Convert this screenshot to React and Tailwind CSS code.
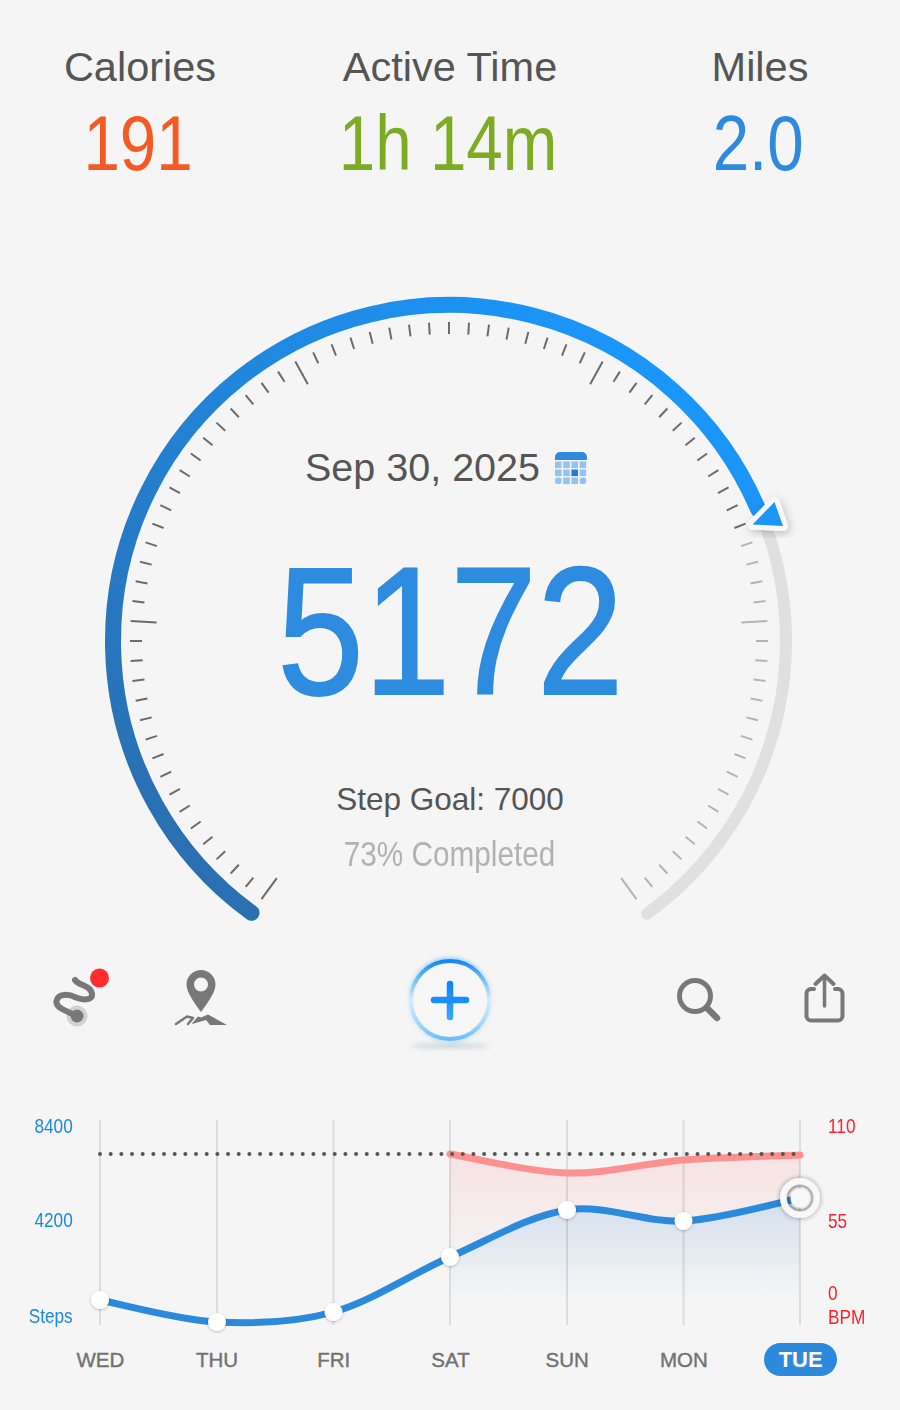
import React from 'react';

const sans = 'font-["Liberation_Sans",Arial,sans-serif]';
const cx = 449;
const cy = 641;

const polar = (deg, r) => {
    const a = (deg * Math.PI) / 180;
    return [cx + r * Math.sin(a), cy - r * Math.cos(a)];
};

const arc = (from, to, r) => {
    const [x1, y1] = polar(from, r);
    const [x2, y2] = polar(to, r);
    return `M${x1} ${y1}A${r} ${r} 0 ${to - from > 180 ? 1 : 0} 1 ${x2} ${y2}`;
};

// catmull-rom through the day points
const spline = (pts) => {
    let d = `M${pts[0][0]} ${pts[0][1]}`;
    for (let i = 0; i < pts.length - 1; i++) {
        const p0 = pts[i - 1] || pts[i];
        const p1 = pts[i];
        const p2 = pts[i + 1];
        const p3 = pts[i + 2] || p2;
        const c1 = [p1[0] + (p2[0] - p0[0]) / 6, p1[1] + (p2[1] - p0[1]) / 6];
        const c2 = [p2[0] - (p3[0] - p1[0]) / 6, p2[1] - (p3[1] - p1[1]) / 6];
        d += `C${c1[0]} ${c1[1]} ${c2[0]} ${c2[1]} ${p2[0]} ${p2[1]}`;
    }
    return d;
};

const dayX = [100, 217, 333.5, 450, 567, 683.5, 800];
const steps = [1300, 1322, 1312, 1257, 1210, 1221, 1198].map((y, i) => [dayX[i], y]);
const bpm = [
    [450, 1154],
    [567, 1173],
    [683.5, 1160],
    [800, 1155],
];
const stepsTail = steps.slice(3);
const days = ['WED', 'THU', 'FRI', 'SAT', 'SUN', 'MON', 'TUE'];
const ticks = Array.from({ length: 81 }, (_, i) => -144 + i * 3.6);

const Stat = ({ label, value, color }) => (
    <div className={`flex flex-col items-center ${sans}`}>
        <p className="text-[41.500px] leading-[48px] text-[#555555] whitespace-nowrap">{label}</p>
        <p className={`text-[78px] leading-[100px] mt-[2px] scale-x-[.84] -translate-x-[2px] whitespace-nowrap ${color}`}>
            {value}
        </p>
    </div>
);

const Gauge = () => (
    <svg className="[grid-area:1/1] w-[900px] h-[650px]" viewBox="0 280 900 650" fill="none">
        <defs>
            <linearGradient id="gaugeBlue" gradientUnits="userSpaceOnUse" x1="640" y1="340" x2="180" y2="860">
                <stop offset="0" stopColor="#1a97fb" />
                <stop offset="1" stopColor="#2a6fb1" />
            </linearGradient>
            <filter id="triShadow" x="-50%" y="-50%" width="200%" height="200%">
                <feDropShadow dx="2" dy="3" stdDeviation="5" floodColor="#000" floodOpacity=".22" />
            </filter>
        </defs>
        {ticks.map((deg, i) => {
            const major = i % 16 === 0;
            const [x1, y1] = polar(deg, major ? 293 : 307);
            const [x2, y2] = polar(deg, 319);
            const done = deg < 69;
            return (
                <line
                    key={i}
                    x1={x1}
                    y1={y1}
                    x2={x2}
                    y2={y2}
                    stroke={done ? '#6b6b6b' : '#b4b4b4'}
                    strokeWidth="2"
                />
            );
        })}
        <path d={arc(60, 144, 337)} stroke="#e0e0e0" strokeWidth="12" strokeLinecap="round" />
        <path d={arc(-144, 67, 336)} stroke="url(#gaugeBlue)" strokeWidth="16" strokeLinecap="round" />
        <path
            d="M774.5 502L752.5 524.5L783 526Z"
            fill="#1a97f7"
            stroke="#f8f8f8"
            strokeWidth="10"
            strokeLinejoin="round"
            paintOrder="stroke"
            filter="url(#triShadow)"
        />
    </svg>
);

const CalendarIcon = () => (
    <svg width="32" height="34" viewBox="0 0 32 34">
        <path d="M0 9V6a5 5 0 0 1 5-5h22a5 5 0 0 1 5 5v3Z" fill="#2d8ade" />
        {[0, 1, 2].map((r) =>
            [0, 1, 2, 3].map((c) => (
                <rect
                    key={`${r}-${c}`}
                    x={c * 8.2}
                    y={10.5 + r * 8}
                    width="6.6"
                    height="6.6"
                    rx={(r === 2 && (c === 0 || c === 3)) ? 2.5 : 0}
                    fill={r === 1 && c === 2 ? '#1b7fd9' : '#92c4ef'}
                />
            ))
        )}
    </svg>
);

const RouteIcon = () => (
    <svg width="70" height="70" viewBox="0 0 70 70" fill="none">
        <circle cx="36" cy="53" r="10.5" fill="#d2d2d2" />
        <circle cx="36" cy="53" r="6.5" fill="#787878" />
        <path
            d="M34 17C38 23 50 22 51 31C52 38 41 37 35 34.500C28 31 17 30 15.500 38C14.500 45 24 47 36 53"
            stroke="#787878"
            strokeWidth="6"
            strokeLinecap="round"
        />
        <circle cx="58.500" cy="15" r="9.500" fill="#ff2d2d" />
    </svg>
);

const PinIcon = () => (
    <svg width="60" height="66" viewBox="0 0 60 66" fill="none">
        <path
            fillRule="evenodd"
            d="M30 2C38 2 44.500 8.500 44.500 16.500C44.500 25 35 37 30 44C25 37 15.500 25 15.500 16.500C15.500 8.500 22 2 30 2ZM30 9.500A7 7 0 1 0 30 23.500A7 7 0 1 0 30 9.500Z"
            fill="#787878"
        />
        <path d="M5 56L16 48.500L22 50L17 56" stroke="#787878" strokeWidth="2.500" strokeLinecap="round" strokeLinejoin="round" />
        <path d="M21 55.500L27 48.500L30 49.500L37 46.500L56 57H39L35 52L21 56Z" fill="#787878" />
    </svg>
);

const PlusButton = () => (
    <svg width="124" height="110" viewBox="3 0 124 110" fill="none" className="overflow-visible">
        <defs>
            <linearGradient id="ringBlue" x1="0" y1="0" x2="0" y2="1">
                <stop offset="0" stopColor="#1089f6" />
                <stop offset=".22" stopColor="#6cbcf7" />
                <stop offset=".5" stopColor="#d8ecfb" />
                <stop offset=".8" stopColor="#a6d7fa" />
                <stop offset="1" stopColor="#6cbdf6" />
            </linearGradient>
            <linearGradient id="plusBlue" gradientUnits="userSpaceOnUse" x1="0" y1="38" x2="0" y2="71">
                <stop offset="0" stopColor="#0f88f5" />
                <stop offset="1" stopColor="#35a5f9" />
            </linearGradient>
            <filter id="blur3" x="-30%" y="-30%" width="160%" height="160%">
                <feGaussianBlur stdDeviation="2.500" />
            </filter>
            <filter id="blur4" x="-30%" y="-300%" width="160%" height="700%">
                <feGaussianBlur stdDeviation="2.500" />
            </filter>
        </defs>
        <ellipse cx="65" cy="100" rx="40" ry="2" fill="#a9bccb" opacity=".7" filter="url(#blur4)" />
        <circle cx="65" cy="54" r="39" stroke="url(#ringBlue)" strokeWidth="4" filter="url(#blur3)" opacity=".75" />
        <circle cx="65" cy="54" r="39" stroke="url(#ringBlue)" strokeWidth="4" fill="#f6f6f6" />
        <path d="M65 38V71" stroke="url(#plusBlue)" strokeWidth="6.500" strokeLinecap="round" />
        <path d="M49 54H81" stroke="#1a8ff6" strokeWidth="6.500" strokeLinecap="round" />
    </svg>
);

const SearchIcon = () => (
    <svg width="52" height="56" viewBox="0 0 52 56" fill="none">
        <circle cx="22" cy="24" r="15.500" stroke="#787878" strokeWidth="5" />
        <path d="M34 36L44 46" stroke="#787878" strokeWidth="6.500" strokeLinecap="round" />
    </svg>
);

const ShareIcon = () => (
    <svg width="52" height="56" viewBox="0 0 52 56" fill="none" stroke="#787878" strokeLinecap="round" strokeLinejoin="round">
        <path d="M11 16H8A4.500 4.500 0 0 0 3.500 20.500V43A4.500 4.500 0 0 0 8 47.500H35A4.500 4.500 0 0 0 39.500 43V20.500A4.500 4.500 0 0 0 35 16H32" strokeWidth="4" />
        <path d="M21.500 33V3" strokeWidth="3.500" />
        <path d="M12.500 11L21.500 2.500L30.500 11" strokeWidth="4" />
    </svg>
);

const Chart = () => (
    <svg className="w-[760px] h-[220px] shrink-0" viewBox="70 1114 760 220" fill="none">
        <defs>
            <linearGradient id="redFill" gradientUnits="userSpaceOnUse" x1="0" y1="1154" x2="0" y2="1270">
                <stop offset="0" stopColor="#f7e2e2" />
                <stop offset="1" stopColor="#f5f5f5" />
            </linearGradient>
            <linearGradient id="blueFill" gradientUnits="userSpaceOnUse" x1="0" y1="1210" x2="0" y2="1300">
                <stop offset="0" stopColor="#d8e2ee" />
                <stop offset="1" stopColor="#f5f5f5" />
            </linearGradient>
            <filter id="dotShadow" x="-50%" y="-50%" width="200%" height="200%">
                <feDropShadow dx="0" dy="1" stdDeviation="1.500" floodColor="#000" floodOpacity=".25" />
            </filter>
            <filter id="ringShadow" x="-50%" y="-50%" width="200%" height="200%">
                <feDropShadow dx="0" dy="0" stdDeviation="2.500" floodColor="#000" floodOpacity=".4" />
            </filter>
        </defs>
        <path d={`${spline(bpm)}L800 1198L800 1300L450 1300Z`} fill="url(#redFill)" />
        <path d={`${spline(stepsTail)}L800 1325L450 1325Z`} fill="url(#blueFill)" />
        {dayX.map((x) => (
            <line key={x} x1={x} y1="1120" x2={x} y2="1325" stroke="#000" strokeOpacity=".1" strokeWidth="2" />
        ))}
        <path d={spline(bpm)} stroke="#ff9090" strokeWidth="7" strokeLinecap="round" />
        <line x1="100" y1="1154" x2="800" y2="1154" stroke="#555555" strokeWidth="4" strokeLinecap="round" strokeDasharray="0 10.67" />
        <path d={spline(steps)} stroke="#2b8adb" strokeWidth="7" />
        {steps.slice(0, 6).map(([x, y]) => (
            <circle key={x} cx={x} cy={y} r="9" fill="#fff" filter="url(#dotShadow)" />
        ))}
        <circle cx="800" cy="1198" r="16.500" stroke="#f8f8f8" strokeWidth="7" filter="url(#ringShadow)" />
        <circle cx="800" cy="1198" r="12.500" stroke="#000" strokeOpacity=".18" strokeWidth="2.500" />
        <circle cx="800" cy="1198" r="9.500" fill="#f8f8f8" />
    </svg>
);

const narrow = 'font-["Liberation_Sans",Arial,sans-serif] text-[21px] leading-[24px] scale-x-[.82] whitespace-nowrap';

const App = () => (
    <div className="w-[900px] h-[1410px] bg-[#f5f5f5] overflow-hidden">
        {/* Totals */}
        <div className="h-[280px] pt-[43px] w-[930px] -ml-[15px] grid grid-cols-3 items-start justify-items-center">
            <Stat label="Calories" value="191" color="text-[#f65a24]" />
            <Stat label="Active Time" value="1h 14m" color="text-[#7dab22]" />
            <Stat label="Miles" value="2.0" color="text-[#2d8ade]" />
        </div>

        {/* Gauge */}
        <div className="grid h-[650px]">
            <Gauge />
            <div className={`[grid-area:1/1] flex flex-col items-center pt-[164px] ${sans}`}>
                <div className="flex items-center gap-[15px] h-[48px] mr-[8px]">
                    <span className="text-[39.500px] text-[#555555]">Sep 30, 2025</span>
                    <CalendarIcon />
                </div>
                <p className="text-[181px] leading-[186px] text-[#2e8ce0] mt-[46px] scale-x-[.86] [-webkit-text-stroke:2px_#2e8ce0]">5172</p>
                <p className="text-[31.500px] leading-[38px] text-[#555555] mt-[56px]">Step Goal: 7000</p>
                <p className="text-[35px] leading-[40px] text-[#b2b2b2] mt-[16px] scale-x-[.85] whitespace-nowrap">73% Completed</p>
            </div>
        </div>

        {/* Toolbar */}
        <div className="grid grid-cols-7 px-[14px] h-[184px] pt-[16px] items-start justify-items-center">
            <div className="mt-[17px]"><RouteIcon /></div>
            <div className="mt-[22px]"><PinIcon /></div>
            <div className="col-start-4"><PlusButton /></div>
            <div className="col-start-6 mt-[26px]"><SearchIcon /></div>
            <div className="mt-[27px] ml-[10px]"><ShareIcon /></div>
        </div>

        {/* Week chart */}
        <div className="flex items-start">
            <div className="w-[70px] h-[214px] flex flex-col justify-between items-end text-[#1b87e6]">
                <span className={`${narrow} origin-right mr-[-3px]`}>8400</span>
                <span className={`${narrow} origin-right mr-[-3px] mt-[-2px]`}>4200</span>
                <span className={`${narrow} origin-right mr-[-3px]`}>Steps</span>
            </div>
            <Chart />
            <div className="h-[214px] flex flex-col items-start text-[#ff1f2d] -ml-[2px]">
                <span className={`${narrow} origin-left`}>110</span>
                <span className={`${narrow} origin-left mt-[71px]`}>55</span>
                <span className={`${narrow} origin-left mt-[48px]`}>0</span>
                <span className={`${narrow} origin-left`}>BPM</span>
            </div>
        </div>
        <div className="grid grid-cols-7 w-[817px] ml-[42px] mt-[9px] items-center justify-items-center">
            {days.map((d) =>
                d === 'TUE' ? (
                    <span key={d} className={`${sans} w-[73px] h-[33px] rounded-full bg-[#2b8adb] text-white font-bold text-[22px] flex items-center justify-center`}>
                        {d}
                    </span>
                ) : (
                    <span key={d} className={`${sans} text-[20.500px] leading-[33px] text-[#727272] [-webkit-text-stroke:0.4px_#727272]`}>{d}</span>
                )
            )}
        </div>
    </div>
);

export default App;
